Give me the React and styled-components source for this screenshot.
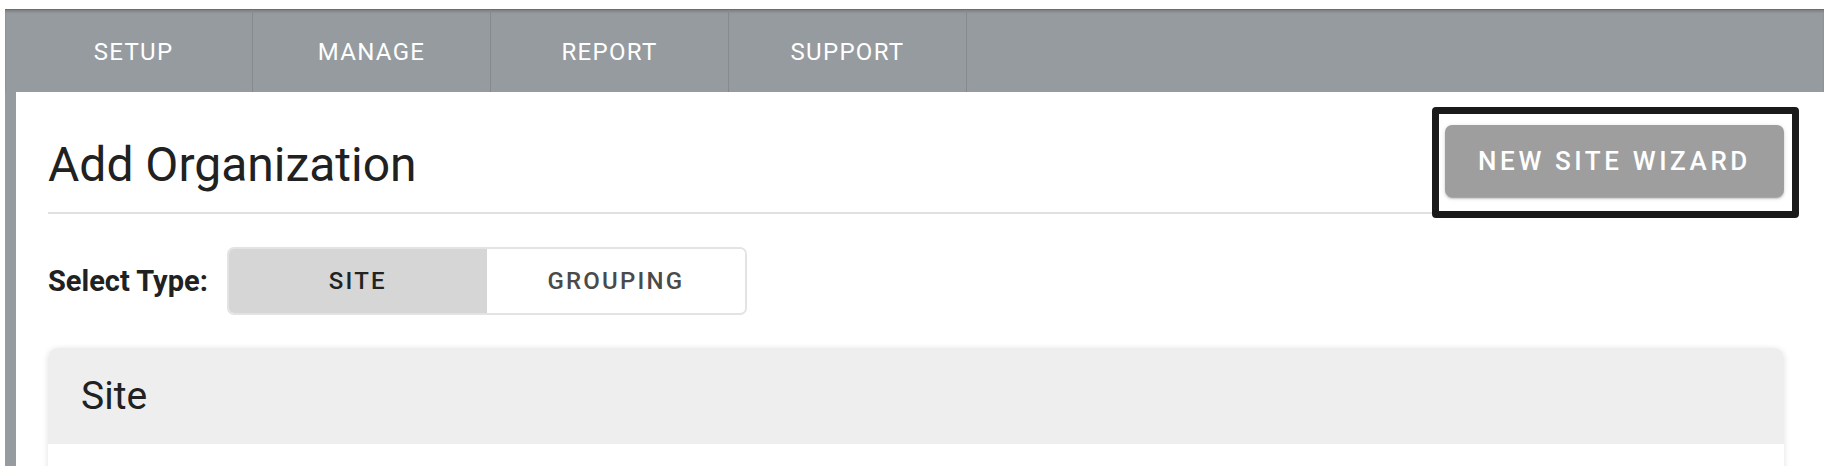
import React, {useState} from "react";
import styled, {createGlobalStyle} from "styled-components";

const GlobalStyle = createGlobalStyle`
    html, body {
        margin: 0;
        padding: 0;
        background: #ffffff;
        font-family: Roboto, "Liberation Sans", Arial, sans-serif;
    }
    * {
        box-sizing: border-box;
    }
`

const NAV_ITEMS = ['SETUP', 'MANAGE', 'REPORT', 'SUPPORT']

const App = () => {

    const [type, setType] = useState('site')

    return (
        <>
            <GlobalStyle/>
            <PageStyled>
                <FrameStyled>
                    <NavStyled>
                        {NAV_ITEMS.map(item => (
                            <NavItemStyled key={item}>{item}</NavItemStyled>
                        ))}
                    </NavStyled>

                    <BodyStyled>
                        <ContentStyled>
                            <HeaderRow>
                                <TitleStyled>Add Organization</TitleStyled>
                                <HighlightBox>
                                    <WizardButton type="button">New Site Wizard</WizardButton>
                                </HighlightBox>
                            </HeaderRow>

                            <TypeRow>
                                <TypeLabel>Select Type:</TypeLabel>
                                <ToggleGroup>
                                    <ToggleButton
                                        type="button"
                                        active={type === 'site'}
                                        onClick={() => setType('site')}
                                    >
                                        Site
                                    </ToggleButton>
                                    <ToggleButton
                                        type="button"
                                        active={type === 'grouping'}
                                        onClick={() => setType('grouping')}
                                    >
                                        Grouping
                                    </ToggleButton>
                                </ToggleGroup>
                            </TypeRow>

                            <CardStyled>
                                <CardHeader>Site</CardHeader>
                                <CardBody/>
                            </CardStyled>
                        </ContentStyled>
                    </BodyStyled>
                </FrameStyled>
            </PageStyled>
        </>
    )
}

const PageStyled = styled.div`
    width: 1824px;
    height: 466px;
    overflow: hidden;
    padding: 9px 0 0 5px;
    background: #ffffff;
`

const FrameStyled = styled.div`
    background-color: #969b9f;
    border-top: 1px solid #6a6e71;
    min-height: 100%;
`

const NavStyled = styled.nav`
    display: flex;
    height: 82px;
    padding-left: 10px;
    box-shadow: inset 0 2px 2px rgba(0, 0, 0, 0.15);
`

const NavItemStyled = styled.div`
    width: 238px;
    display: flex;
    align-items: center;
    justify-content: center;
    padding-top: 2px;
    border-right: 1px solid #868a8e;
    color: #ffffff;
    font-size: 24px;
    letter-spacing: 1.3px;
`

const BodyStyled = styled.div`
    padding-left: 11px;
`

const ContentStyled = styled.div`
    background: #ffffff;
    min-height: 380px;
    padding: 14px 40px 0 32px;
`

const HeaderRow = styled.div`
    display: flex;
    justify-content: space-between;
    align-items: flex-start;
    height: 108px;
    border-bottom: 2px solid #e0e0e0;
`

const TitleStyled = styled.h1`
    margin: 31px 0 0;
    font-size: 48px;
    line-height: 56px;
    font-weight: 400;
    color: #212121;
`

const HighlightBox = styled.div`
    margin-top: 1px;
    margin-right: -15px;
    padding: 11px 8px 14px 6px;
    border: 7px solid #1a1a1a;
    border-radius: 4px;
    background: #ffffff;
`

const WizardButton = styled.button`
    display: block;
    width: 339px;
    height: 72px;
    border: none;
    border-radius: 7px;
    background-color: #9e9e9e;
    color: #ffffff;
    font-family: Roboto, "Liberation Sans", Arial, sans-serif;
    font-size: 26px;
    font-weight: 500;
    letter-spacing: 3.6px;
    text-transform: uppercase;
    box-shadow: 0 3px 1px -2px rgba(0, 0, 0, 0.2), 0 2px 2px 0 rgba(0, 0, 0, 0.14), 0 1px 5px 0 rgba(0, 0, 0, 0.12);
    cursor: pointer;
`

const TypeRow = styled.div`
    display: flex;
    align-items: center;
    gap: 19px;
    margin-top: 33px;
`

const TypeLabel = styled.span`
    font-size: 29px;
    font-weight: 700;
    color: #212121;
`

const ToggleGroup = styled.div`
    display: flex;
    height: 68px;
    border: 2px solid #e3e3e3;
    border-radius: 7px;
    overflow: hidden;
`

const ToggleButton = styled.button`
    width: 258px;
    border: none;
    background-color: ${props => props.active ? '#d6d6d6' : '#ffffff'};
    color: ${props => props.active ? '#222222' : '#4a4a4a'};
    font-family: Roboto, "Liberation Sans", Arial, sans-serif;
    font-size: 24px;
    font-weight: 500;
    letter-spacing: 2.2px;
    text-transform: uppercase;
    cursor: pointer;
`

const CardStyled = styled.section`
    margin-top: 33px;
    border-radius: 10px;
    overflow: hidden;
    box-shadow: 0 1px 6px rgba(0, 0, 0, 0.13);
`

const CardHeader = styled.div`
    height: 96px;
    display: flex;
    align-items: center;
    padding-left: 33px;
    background-color: #eeeeee;
    font-size: 39px;
    color: #212121;
`

const CardBody = styled.div`
    height: 120px;
    background: #ffffff;
`

export default App
